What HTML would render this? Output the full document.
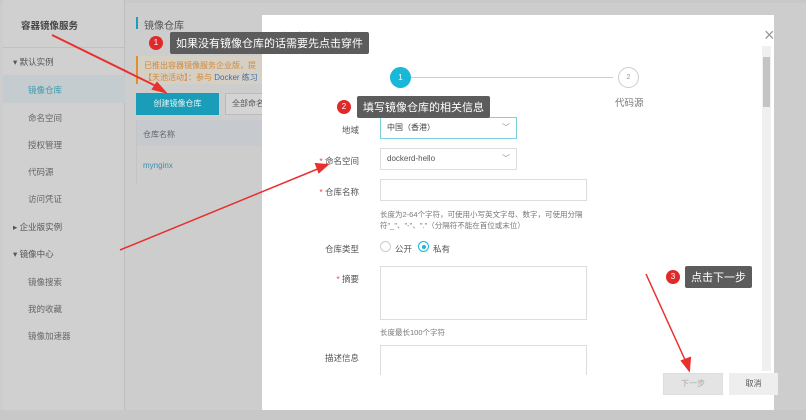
<!DOCTYPE html>
<html><head><meta charset="utf-8"><style>
*{margin:0;padding:0;box-sizing:border-box}
body{width:806px;height:420px;overflow:hidden;background:#cdcdcd;font-family:"Liberation Sans","Noto Sans CJK SC",sans-serif;position:relative;font-size:8px;color:#555}
.a{position:absolute}
.side{left:3px;top:0;width:122px;height:418px;background:#d0d0d0;border-right:1px solid #bdbdbd}
.side div{position:absolute;left:0;width:122px;font-size:8.5px;color:#666}
.tip{position:absolute;background:#5c5c5c;color:#fff;font-size:11px;padding:3px 6px;border-radius:2px;white-space:nowrap}
.dot{position:absolute;width:14px;height:14px;border-radius:50%;background:#e02a2a;color:#fff;font-size:8px;text-align:center;line-height:14px}
.lbl{position:absolute;font-size:8.5px;color:#555;text-align:right;width:60px}
.in{position:absolute;border:1px solid #ddd;background:#fff}
.req{color:#e44}
</style></head><body>
<div class="a" style="left:0;top:0;width:806px;height:3px;background:#c8c8c8"></div>
<div class="a side">
 <div style="top:18px;left:18px;font-size:9.5px;font-weight:bold;color:#444">容器镜像服务</div>
 <div style="top:47px;height:1px;background:#c0c0c0"></div>
 <div style="top:56px;left:10px;color:#555">▾ 默认实例</div>
 <div style="top:75px;height:28px;background:#c4ccd0"></div>
 <div style="top:84px;left:25px;color:#3a9ab0">镜像仓库</div>
 <div style="top:112px;left:25px">命名空间</div>
 <div style="top:139px;left:25px">授权管理</div>
 <div style="top:166px;left:25px">代码源</div>
 <div style="top:193px;left:25px">访问凭证</div>
 <div style="top:221px;left:10px;color:#555">▸ 企业版实例</div>
 <div style="top:248px;left:10px;color:#555">▾ 镜像中心</div>
 <div style="top:276px;left:25px">镜像搜索</div>
 <div style="top:303px;left:25px">我的收藏</div>
 <div style="top:330px;left:25px">镜像加速器</div>
</div>
<div class="a" style="left:136px;top:17px;width:2px;height:12px;background:#1aa0bb"></div>
<div class="a" style="left:144px;top:17px;font-size:10px;color:#555">镜像仓库</div>
<div class="a" style="left:136px;top:56px;width:130px;height:28px;background:#d6cfc4;border-left:2px solid #e0902a"></div>
<div class="a" style="left:144px;top:60px;font-size:8px;color:#d0893a;white-space:nowrap;width:118px;overflow:hidden">已推出容器镜像服务企业版，提</div>
<div class="a" style="left:144px;top:72px;font-size:8px;color:#d0893a;white-space:nowrap;width:118px;overflow:hidden">【天池活动】：参与 <span style="color:#3a70b0">Docker 练习</span></div>
<div class="a" style="left:136px;top:93px;width:83px;height:22px;background:#1a9db8;color:#e8f4f6;font-size:8px;text-align:center;line-height:22px">创建镜像仓库</div>
<div class="a" style="left:225px;top:93px;width:40px;height:22px;background:#d4d4d4;border:1px solid #bbb;font-size:8px;line-height:20px;padding-left:6px;color:#555;overflow:hidden;white-space:nowrap">全部命名</div>
<div class="a" style="left:136px;top:120px;width:126px;height:64px;border-left:1px solid #c4c4c4"></div>
<div class="a" style="left:137px;top:120px;width:125px;height:26px;background:#c6c9cd"></div>
<div class="a" style="left:143px;top:129px;font-size:8px;color:#666">仓库名称</div>
<div class="a" style="left:143px;top:161px;font-size:8px;color:#3a90b0">mynginx</div>

<!-- modal -->
<div class="a" style="left:262px;top:15px;width:512px;height:395px;background:#fff"></div>
<div class="a" style="left:280px;top:29px;font-size:12px;color:#444">创建镜像仓库</div>
<div class="a" style="left:764px;top:26px;font-size:18px;color:#999;line-height:18px">×</div>
<div class="a" style="left:762px;top:46px;width:9px;height:325px;background:#f0f0f0"></div>
<div class="a" style="left:763px;top:57px;width:7px;height:50px;background:#c4c4c4"></div>
<div class="a" style="left:390px;top:67px;width:21px;height:21px;border-radius:50%;background:#19b8d8;color:#fff;font-size:8px;text-align:center;line-height:21px">1</div>
<div class="a" style="left:411px;top:77px;width:202px;height:1px;background:#ccc"></div>
<div class="a" style="left:618px;top:67px;width:21px;height:21px;border-radius:50%;border:1px solid #ccc;color:#999;font-size:7px;text-align:center;line-height:19px">2</div>
<div class="a" style="left:378px;top:95px;font-size:9px;color:#555">仓库信息</div>
<div class="a" style="left:615px;top:95px;font-size:9.5px;color:#777">代码源</div>

<div class="lbl" style="left:299px;top:124px">地域</div>
<div class="in" style="left:380px;top:117px;width:137px;height:22px;border-color:#7ccfe0;font-size:8px;line-height:20px;padding-left:6px;color:#444">中国（香港）<span style="position:absolute;right:6px;color:#888">﹀</span></div>
<div class="lbl" style="left:299px;top:155px"><span class="req">* </span>命名空间</div>
<div class="in" style="left:380px;top:148px;width:137px;height:22px;font-size:8px;line-height:20px;padding-left:6px;color:#555">dockerd-hello<span style="position:absolute;right:6px;color:#888">﹀</span></div>
<div class="lbl" style="left:299px;top:186px"><span class="req">* </span>仓库名称</div>
<div class="in" style="left:380px;top:179px;width:207px;height:22px"></div>
<div class="a" style="left:380px;top:209px;font-size:7.5px;color:#777;width:215px;line-height:11px">长度为2-64个字符，可使用小写英文字母、数字，可使用分隔符"_"、"-"、"."（分隔符不能在首位或末位）</div>
<div class="lbl" style="left:299px;top:243px">仓库类型</div>
<div class="a" style="left:380px;top:241px;width:11px;height:11px;border-radius:50%;border:1px solid #ccc"></div>
<div class="a" style="left:395px;top:243px;font-size:8.5px">公开</div>
<div class="a" style="left:418px;top:241px;width:11px;height:11px;border-radius:50%;border:1px solid #19b8d8"></div>
<div class="a" style="left:421.5px;top:244.5px;width:4px;height:4px;border-radius:50%;background:#19b8d8"></div>
<div class="a" style="left:433px;top:243px;font-size:8.5px">私有</div>
<div class="lbl" style="left:299px;top:273px"><span class="req">* </span>摘要</div>
<div class="in" style="left:380px;top:266px;width:207px;height:54px"></div>
<div class="a" style="left:380px;top:327px;font-size:7.5px;color:#777">长度最长100个字符</div>
<div class="lbl" style="left:299px;top:352px">描述信息</div>
<div class="in" style="left:380px;top:345px;width:207px;height:30px;border-bottom:none"></div>
<div class="a" style="left:663px;top:373px;width:60px;height:22px;background:#e4e4e4;border:1px solid #ddd;color:#aaa;font-size:8px;text-align:center;line-height:20px">下一步</div>
<div class="a" style="left:729px;top:373px;width:49px;height:22px;background:#eee;color:#555;font-size:8px;text-align:center;line-height:22px">取消</div>
<div class="a" style="left:0;top:410px;width:806px;height:10px;background:#c8c8c8"></div>

<!-- annotations -->
<div class="dot" style="left:149px;top:36px">1</div>
<div class="tip" style="left:170px;top:32px">如果没有镜像仓库的话需要先点击穿件</div>
<div class="dot" style="left:337px;top:100px">2</div>
<div class="tip" style="left:357px;top:96px">填写镜像仓库的相关信息</div>
<div class="dot" style="left:666px;top:270px">3</div>
<div class="tip" style="left:685px;top:266px">点击下一步</div>
<svg class="a" style="left:0;top:0" width="806" height="420">
<g stroke="#e8302e" stroke-width="2" fill="#e8302e">
<line x1="52" y1="35" x2="160" y2="88"/>
<polygon points="165,92 153,89 157,83" />
<line x1="120" y1="250" x2="320" y2="168" stroke-width="1.5"/>
<polygon points="327,165 316,164 319,172"/>
<line x1="646" y1="274" x2="686" y2="362" stroke-width="1.5"/>
<polygon points="689,370 682,361 690,358"/>
</g></svg>
</body></html>
